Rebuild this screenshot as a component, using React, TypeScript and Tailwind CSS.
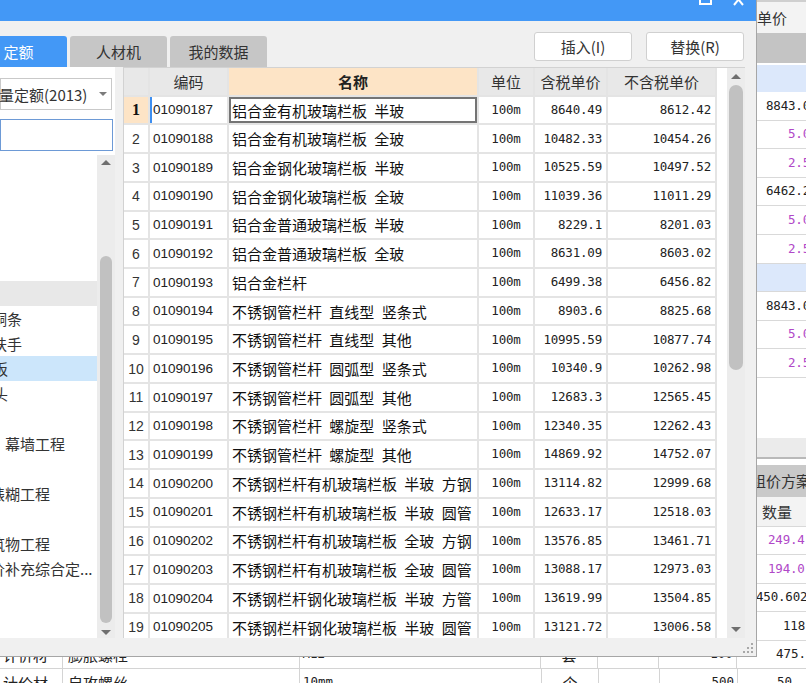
type Row = [string, string, string, string, string];

const ROWS: Row[] = [
  ['01090187', '铝合金有机玻璃栏板 半玻', '100m', '8640.49', '8612.42'],
  ['01090188', '铝合金有机玻璃栏板 全玻', '100m', '10482.33', '10454.26'],
  ['01090189', '铝合金钢化玻璃栏板 半玻', '100m', '10525.59', '10497.52'],
  ['01090190', '铝合金钢化玻璃栏板 全玻', '100m', '11039.36', '11011.29'],
  ['01090191', '铝合金普通玻璃栏板 半玻', '100m', '8229.1', '8201.03'],
  ['01090192', '铝合金普通玻璃栏板 全玻', '100m', '8631.09', '8603.02'],
  ['01090193', '铝合金栏杆', '100m', '6499.38', '6456.82'],
  ['01090194', '不锈钢管栏杆 直线型 竖条式', '100m', '8903.6', '8825.68'],
  ['01090195', '不锈钢管栏杆 直线型 其他', '100m', '10995.59', '10877.74'],
  ['01090196', '不锈钢管栏杆 圆弧型 竖条式', '100m', '10340.9', '10262.98'],
  ['01090197', '不锈钢管栏杆 圆弧型 其他', '100m', '12683.3', '12565.45'],
  ['01090198', '不锈钢管栏杆 螺旋型 竖条式', '100m', '12340.35', '12262.43'],
  ['01090199', '不锈钢管栏杆 螺旋型 其他', '100m', '14869.92', '14752.07'],
  ['01090200', '不锈钢栏杆有机玻璃栏板 半玻 方钢', '100m', '13114.82', '12999.68'],
  ['01090201', '不锈钢栏杆有机玻璃栏板 半玻 圆管', '100m', '12633.17', '12518.03'],
  ['01090202', '不锈钢栏杆有机玻璃栏板 全玻 方钢', '100m', '13576.85', '13461.71'],
  ['01090203', '不锈钢栏杆有机玻璃栏板 全玻 圆管', '100m', '13088.17', '12973.03'],
  ['01090204', '不锈钢栏杆钢化玻璃栏板 半玻 方管', '100m', '13619.99', '13504.85'],
  ['01090205', '不锈钢栏杆钢化玻璃栏板 半玻 圆管', '100m', '13121.72', '13006.58'],
];

// tree rows are clipped on the left, so each text gets its own offset
const TREE: { text: string; shift: string; tone: '' | 'gray' | 'sel' }[] = [
  { text: '', shift: '', tone: '' },
  { text: '', shift: '', tone: '' },
  { text: '', shift: '', tone: '' },
  { text: '', shift: '', tone: '' },
  { text: '', shift: '', tone: '' },
  { text: '', shift: '', tone: 'gray' },
  { text: '铜条', shift: '-ml-[8px]', tone: '' },
  { text: '扶手', shift: '-ml-[8px]', tone: '' },
  { text: '板', shift: '-ml-[7px]', tone: 'sel' },
  { text: '头', shift: '-ml-[7px]', tone: '' },
  { text: '', shift: '', tone: '' },
  { text: '幕墙工程', shift: 'ml-[5px]', tone: '' },
  { text: '', shift: '', tone: '' },
  { text: '裱糊工程', shift: '-ml-[10px]', tone: '' },
  { text: '', shift: '', tone: '' },
  { text: '筑物工程', shift: '-ml-[10px]', tone: '' },
  { text: '价补充综合定...', shift: '-ml-[10px]', tone: '' },
];

const UPPER = [
  { v: '8843.0', pad: 'pl-[9px]', purple: false, blue: false },
  { v: '5.00', pad: 'pl-[31px]', purple: true, blue: false },
  { v: '2.50', pad: 'pl-[31px]', purple: true, blue: false },
  { v: '6462.2', pad: 'pl-[9px]', purple: false, blue: false },
  { v: '5.00', pad: 'pl-[31px]', purple: true, blue: false },
  { v: '2.50', pad: 'pl-[31px]', purple: true, blue: false },
  { v: '', pad: '', purple: false, blue: true },
  { v: '8843.0', pad: 'pl-[9px]', purple: false, blue: false },
  { v: '5.00', pad: 'pl-[31px]', purple: true, blue: false },
  { v: '2.50', pad: 'pl-[31px]', purple: true, blue: false },
];

const QTY = [
  { v: '249.4', pad: 'pl-[11px]', purple: true },
  { v: '194.0', pad: 'pl-[11px]', purple: true },
  { v: '450.602', pad: '-ml-[1px]', purple: false },
  { v: '118', pad: 'pl-[26px]', purple: false },
];

const BOTTOM = [
  ['计价材', '膨胀螺栓', 'M12', '套', '', '100', '475.'],
  ['计价材', '自攻螺丝', '10mm', '个', '', '500', '50'],
];

function Up() {
  return <div className="h-0 w-0 border-x-[5px] border-b-[5px] border-x-transparent border-b-[#6f6f6f]" />;
}

function Down() {
  return <div className="h-0 w-0 border-x-[5px] border-t-[5px] border-x-transparent border-t-[#6f6f6f]" />;
}

function RightColumn() {
  return (
    <div className="flex w-[49px] shrink-0 flex-col overflow-hidden whitespace-nowrap">
      <div className="flex h-[33px] items-center border-t-2 border-[#cfcfcf] bg-[#f3f3f3] text-[15px] leading-none text-[#333]">
        单价
      </div>
      <div className="h-[30px] bg-[#c4c4c4]" />
      <div className="h-[2px] bg-white" />
      <div className="h-[27px] bg-[#dce8fb]" />
      {UPPER.map((r, i) => (
        <div
          key={i}
          className={`flex h-[28.6px] items-center border-b border-[#d9d9d9] font-['DejaVu_Sans_Mono',monospace] text-[12.5px] leading-none tracking-[-0.2px] ${
            r.blue ? 'bg-[#dce8fb]' : 'bg-white'
          } ${r.purple ? 'text-[#b048c8]' : 'text-[#222]'} ${r.pad}`}
        >
          {r.v}
        </div>
      ))}
      <div className="h-[60px] bg-white" />
      <div className="h-[19px] bg-[#ebebeb]" />
      <div className="h-[2px] bg-[#b9b9b9]" />
      <div className="h-[6px] bg-white" />
      <div className="flex h-[32px] items-center bg-[#c9c9c9] text-[15px] leading-none text-[#333]">
        <span className="-ml-[6px]">组价方案</span>
      </div>
      <div className="flex h-[30px] items-center border-b border-[#d9d9d9] bg-[#f3f3f3] pl-[5px] text-[15px] leading-none text-[#333]">
        数量
      </div>
      {QTY.map((r, i) => (
        <div
          key={i}
          className={`flex h-[28.5px] items-center border-b border-[#d9d9d9] font-['DejaVu_Sans_Mono',monospace] text-[12.5px] leading-none tracking-[-0.2px] ${
            r.purple ? 'text-[#b048c8]' : 'text-[#222]'
          } ${r.pad}`}
        >
          {r.v}
        </div>
      ))}
    </div>
  );
}

function BottomRows() {
  return (
    <div className="flex flex-col">
      {BOTTOM.map((r, i) => (
        <div key={i} className="flex h-[28px] border-b border-[#d4d4d4] text-[#222]">
          <div className="flex w-[63px] items-center border-r border-[#d4d4d4] pl-[3px] text-[15px] leading-none">{r[0]}</div>
          <div className="flex w-[237px] items-center border-r border-[#d4d4d4] pl-[5px] text-[15px] leading-none">{r[1]}</div>
          <div className="flex w-[242px] items-center border-r border-[#d4d4d4] pl-[3px] font-['DejaVu_Sans_Mono',monospace] text-[12.5px] leading-none">{r[2]}</div>
          <div className="flex w-[57px] items-center justify-center border-r border-[#d4d4d4] text-[15px] leading-none">{r[3]}</div>
          <div className="w-[61px] border-r border-[#d4d4d4]">{r[4]}</div>
          <div className="flex w-[78px] items-center justify-end border-r border-[#d4d4d4] pr-[3px] font-['DejaVu_Sans_Mono',monospace] text-[12.5px] leading-none">{r[5]}</div>
          <div className="flex flex-1 items-center pl-[39px] font-['DejaVu_Sans_Mono',monospace] text-[12.5px] leading-none">{r[6]}</div>
        </div>
      ))}
    </div>
  );
}

function LeftPanel() {
  return (
    <div className="flex w-[115px] shrink-0 flex-col bg-white">
      <div className="mt-[11px] flex h-[32px] w-[112px] items-center justify-between border border-[#c9c9c9] pr-[4px] text-[15px] leading-none text-[#333]">
        <span className="-ml-[2px] whitespace-nowrap">量定额(2013)</span>
        <div className="h-0 w-0 border-x-[4px] border-t-[4px] border-x-transparent border-t-[#7b7b7b]" />
      </div>
      <div className="mt-[9px] h-[32px] w-[113px] border border-[#6d9ad6]" />
      <div className="mt-[4px] flex min-h-0 flex-1">
        <div className="flex w-[97px] flex-col overflow-hidden pt-px text-[15px] leading-none text-[#333]">
          {TREE.map((t, i) => (
            <div
              key={i}
              className={`flex h-[25px] shrink-0 items-center whitespace-nowrap ${
                t.tone === 'gray' ? 'bg-[#e8e8e8]' : t.tone === 'sel' ? 'bg-[#cce6fb]' : ''
              }`}
            >
              <span className={t.shift}>{t.text}</span>
            </div>
          ))}
        </div>
        <div className="flex w-[18px] flex-col overflow-hidden bg-[#ececec]">
          <div className="flex h-[14px] shrink-0 items-center justify-center">
            <Up />
          </div>
          <div className="mx-[3px] mt-[87px] h-[367px] shrink-0 rounded-full bg-[#c1c1c1]" />
          <div className="mt-[2px] flex h-[14px] shrink-0 items-center justify-center">
            <Down />
          </div>
        </div>
      </div>
    </div>
  );
}

function Grid() {
  const cell = 'flex items-center border-b-2 border-r-2 border-[#e4e4e4]';
  const num = "font-['DejaVu_Sans_Mono',monospace] text-[12.5px] leading-none tracking-[-0.2px] text-[#222]";
  return (
    <div className="grid w-[593px] shrink-0 auto-rows-[28.72px] grid-cols-[26px_79px_250px_56px_73px_109px] content-start overflow-hidden">
      <div className={`${cell} h-[29px] bg-[#e8e8e8]`} />
      <div className={`${cell} h-[29px] justify-center bg-[#e8e8e8] text-[15px] leading-none text-[#333]`}>编码</div>
      <div className={`${cell} h-[29px] justify-center bg-[#fde4c6] text-[15px] font-bold leading-none text-[#222]`}>名称</div>
      <div className={`${cell} h-[29px] justify-center bg-[#e8e8e8] text-[15px] leading-none text-[#333]`}>单位</div>
      <div className={`${cell} h-[29px] justify-center bg-[#e8e8e8] text-[15px] leading-none text-[#333]`}>含税单价</div>
      <div className={`${cell} h-[29px] justify-center bg-[#e8e8e8] text-[15px] leading-none text-[#333]`}>不含税单价</div>
      {ROWS.map((r, i) => {
        const first = i === 0;
        return [
          <div
            key={`n${i}`}
            className={`${cell} justify-center leading-none ${
              first
                ? "bg-[#fde4c6] font-['Liberation_Serif',serif] text-[16px] font-bold text-[#111]"
                : "font-['Liberation_Sans',sans-serif] text-[14px] text-[#333]"
            }`}
          >
            {i + 1}
          </div>,
          <div
            key={`c${i}`}
            className={`${cell} pl-[3px] font-['Liberation_Sans',sans-serif] text-[13.5px] leading-none text-[#222] ${
              first ? 'shadow-[inset_2px_0_0_#3d8ef0]' : ''
            }`}
          >
            {r[0]}
          </div>,
          <div
            key={`m${i}`}
            className={`${cell} whitespace-nowrap pl-[3px] text-[15px] leading-none text-[#111] [word-spacing:4px] ${
              first ? 'shadow-[inset_0_0_0_2px_#747474]' : ''
            }`}
          >
            {r[1]}
          </div>,
          <div key={`u${i}`} className={`${cell} justify-center ${num}`}>
            {r[2]}
          </div>,
          <div key={`t${i}`} className={`${cell} justify-end pr-[4px] ${num}`}>
            {r[3]}
          </div>,
          <div key={`x${i}`} className={`${cell} justify-end pr-[4px] ${num}`}>
            {r[4]}
          </div>,
        ];
      })}
    </div>
  );
}

function Dialog() {
  return (
    <div className="absolute left-0 top-0 flex h-[657px] w-[757px] flex-col border-b border-r border-[#a6a6a6] bg-[#f0f0f0]">
      {/* title bar, mostly above the screen */}
      <div className="flex h-[21px] shrink-0 items-start justify-end gap-[21px] bg-[#4398f6] pr-[12px]">
        <svg width="13" height="13" viewBox="0 0 13 13" className="-mt-[8px]">
          <rect x="1" y="1" width="11" height="11" fill="none" stroke="#fff" strokeWidth="2" />
        </svg>
        <svg width="11" height="13" viewBox="0 0 11 13" className="-mt-[7px]">
          <path d="M1 1 L10 12 M10 1 L1 12" stroke="#fff" strokeWidth="2" />
        </svg>
      </div>

      <div className="flex h-[46px] shrink-0 justify-between">
        <div className="flex items-end gap-[3px]">
          <div className="-ml-[30px] flex h-[31px] w-[97px] items-center justify-center rounded-t-[3px] bg-[#4398f6] text-[15px] leading-none text-white">
            定额
          </div>
          <div className="flex h-[31px] w-[97px] items-center justify-center rounded-t-[3px] bg-[#c6c6c6] text-[15px] leading-none text-[#333]">
            人材机
          </div>
          <div className="flex h-[31px] w-[97px] items-center justify-center rounded-t-[3px] bg-[#c6c6c6] text-[15px] leading-none text-[#333]">
            我的数据
          </div>
        </div>
        <div className="mr-[12px] mt-[11px] flex gap-[14px]">
          <button className="flex h-[29px] w-[98px] items-center justify-center rounded-[3px] border border-[#d0d0d0] bg-white text-[15px] leading-none text-[#333]">
            插入(I)
          </button>
          <button className="flex h-[29px] w-[98px] items-center justify-center rounded-[3px] border border-[#d0d0d0] bg-white text-[15px] leading-none text-[#333]">
            替换(R)
          </button>
        </div>
      </div>

      <div className="flex h-[571px] shrink-0">
        <LeftPanel />
        <div className="ml-[8px] flex w-[622px] border-l border-t border-[#d2d2d2] bg-white">
          <Grid />
          <div className="w-[10px]" />
          <div className="flex w-[18px] flex-col bg-[#ececec]">
            <div className="flex h-[17px] shrink-0 items-center justify-center">
              <Up />
            </div>
            <div className="mx-[2px] h-[285px] shrink-0 rounded-full bg-[#c1c1c1]" />
            <div className="mt-auto flex h-[17px] shrink-0 items-center justify-center">
              <Down />
            </div>
          </div>
        </div>
      </div>

      <div className="flex flex-1 items-end justify-end pb-[3px] pr-[3px]">
        <svg width="10" height="10" viewBox="0 0 10 10">
          <rect x="8" y="0" width="2" height="2" fill="#a8a8a8" />
          <rect x="4" y="4" width="2" height="2" fill="#a8a8a8" />
          <rect x="8" y="4" width="2" height="2" fill="#a8a8a8" />
          <rect x="0" y="8" width="2" height="2" fill="#a8a8a8" />
          <rect x="4" y="8" width="2" height="2" fill="#a8a8a8" />
          <rect x="8" y="8" width="2" height="2" fill="#a8a8a8" />
        </svg>
      </div>
    </div>
  );
}

export default function App() {
  return (
    <div className="relative h-[683px] w-[806px] overflow-hidden bg-white font-['Noto_Sans_CJK_SC',sans-serif] text-[#222]">
      <div className="flex flex-col">
        <div className="flex h-[641px]">
          <div className="w-[757px] shrink-0" />
          <RightColumn />
        </div>
        <BottomRows />
      </div>
      <Dialog />
    </div>
  );
}
